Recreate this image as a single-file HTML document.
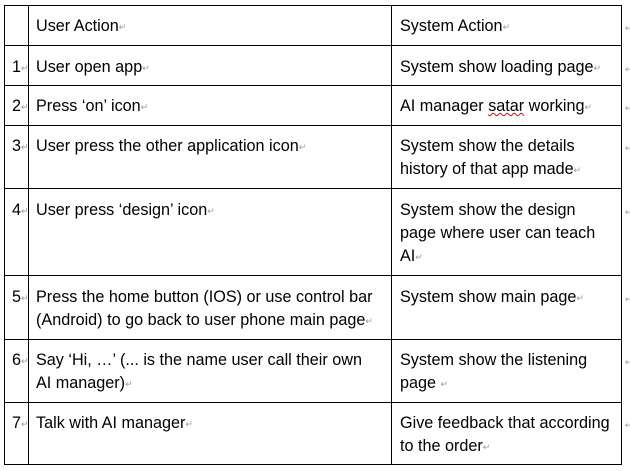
<!DOCTYPE html>
<html><head><style>
body{margin:0;width:630px;height:471px;background:#fff;position:relative;overflow:hidden;font-family:"Liberation Sans",Arial,sans-serif;font-size:16.2px;color:#000}
.h{position:absolute;left:4px;width:618px;height:1px;background:#000}
.v{position:absolute;top:5px;height:460px;width:1px;background:#000}
.t{position:absolute;line-height:23px;white-space:nowrap}
.p{color:#999;font-size:9px;vertical-align:1px}
</style></head><body>
<div class="h" style="top:5px"></div>
<div class="h" style="top:45px"></div>
<div class="h" style="top:85px"></div>
<div class="h" style="top:125px"></div>
<div class="h" style="top:188px"></div>
<div class="h" style="top:275px"></div>
<div class="h" style="top:339px"></div>
<div class="h" style="top:402px"></div>
<div class="h" style="top:464px"></div>
<div class="v" style="left:4px"></div>
<div class="v" style="left:28px"></div>
<div class="v" style="left:391px"></div>
<div class="v" style="left:621px"></div>

<div class="t" style="left:36px;top:15px">User Action<span class="p">↵</span></div>
<div class="t" style="left:400px;top:15px">System Action<span class="p">↵</span></div>

<div class="t" style="left:12px;top:56px">1<span class="p">↵</span></div>
<div class="t" style="left:36px;top:56px">User open app<span class="p">↵</span></div>
<div class="t" style="left:400px;top:56px">System show loading page<span class="p">↵</span></div>

<div class="t" style="left:12px;top:95px">2<span class="p">↵</span></div>
<div class="t" style="left:36px;top:95px">Press ‘on’ icon<span class="p">↵</span></div>
<div class="t" style="left:400px;top:95px">AI manager <span style="text-decoration:underline wavy #e00;text-decoration-thickness:1px">satar</span> working<span class="p">↵</span></div>

<div class="t" style="left:12px;top:135px">3<span class="p">↵</span></div>
<div class="t" style="left:36px;top:135px">User press the other application icon<span class="p">↵</span></div>
<div class="t" style="left:400px;top:135px">System show the details<br>history of that app made<span class="p">↵</span></div>

<div class="t" style="left:12px;top:199px">4<span class="p">↵</span></div>
<div class="t" style="left:36px;top:199px">User press ‘design’ icon<span class="p">↵</span></div>
<div class="t" style="left:400px;top:199px">System show the design<br>page where user can teach<br>AI<span class="p">↵</span></div>

<div class="t" style="left:12px;top:286px">5<span class="p">↵</span></div>
<div class="t" style="left:36px;top:286px">Press the home button (IOS) or use control bar<br>(Android) to go back to user phone main page<span class="p">↵</span></div>
<div class="t" style="left:400px;top:286px">System show main page<span class="p">↵</span></div>

<div class="t" style="left:12px;top:349px">6<span class="p">↵</span></div>
<div class="t" style="left:36px;top:349px">Say ‘Hi, …’ (... is the name user call their own<br>AI manager)<span class="p">↵</span></div>
<div class="t" style="left:400px;top:349px">System show the listening<br>page <span class="p">↵</span></div>

<div class="t" style="left:12px;top:412px">7<span class="p">↵</span></div>
<div class="t" style="left:36px;top:412px">Talk with AI manager<span class="p">↵</span></div>
<div class="t" style="left:400px;top:412px">Give feedback that according<br>to the order<span class="p">↵</span></div>

<div class="t p" style="left:625px;top:17px">↵</div>
<div class="t p" style="left:625px;top:58px">↵</div>
<div class="t p" style="left:625px;top:97px">↵</div>
<div class="t p" style="left:625px;top:137px">↵</div>
<div class="t p" style="left:625px;top:201px">↵</div>
<div class="t p" style="left:625px;top:288px">↵</div>
<div class="t p" style="left:625px;top:351px">↵</div>
<div class="t p" style="left:625px;top:414px">↵</div>
</body></html>
